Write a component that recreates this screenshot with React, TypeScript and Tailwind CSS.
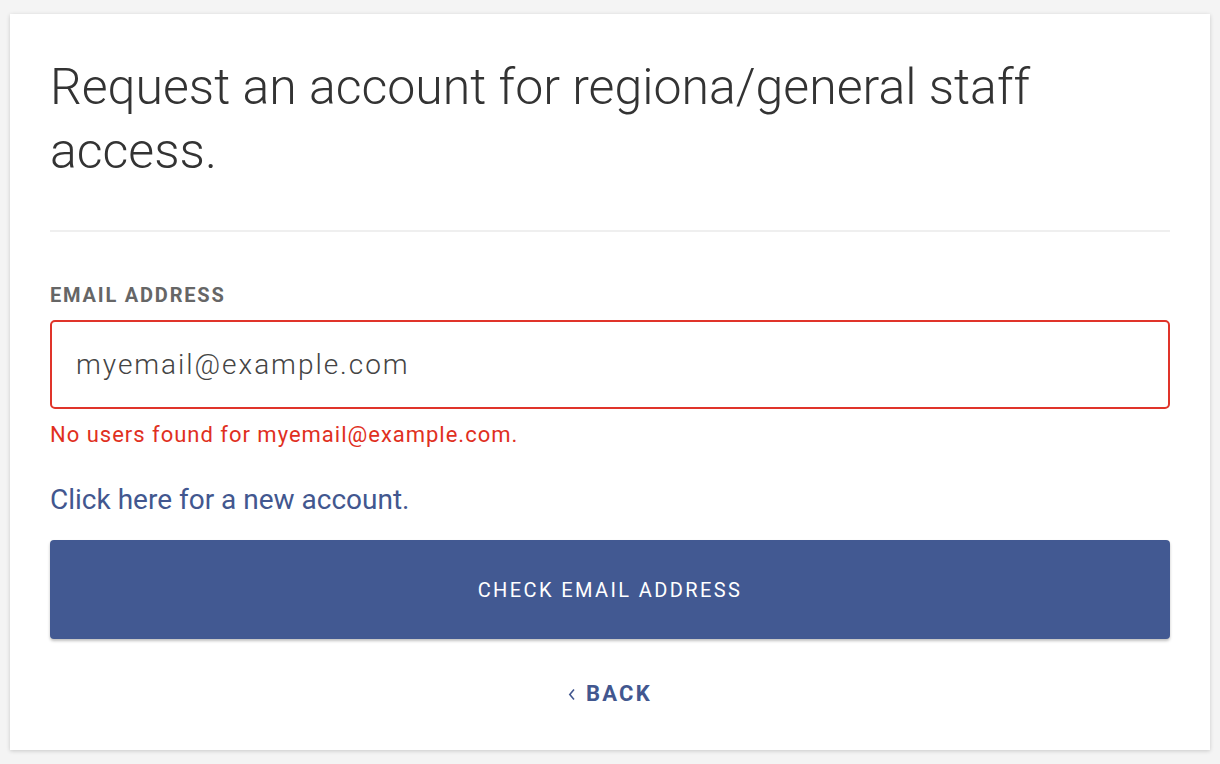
import React from 'react';

const App: React.FC = () => {
  return (
    <div className="min-h-[764px] bg-[#f4f4f4] pt-[14px] px-[10px] font-['Roboto',sans-serif]">
      <div className="bg-white shadow-[0_1px_4px_rgba(0,0,0,0.18)] px-[40px] pt-[41px] pb-[43px]">
        <h1 className="text-[50px] leading-[64px] font-light text-[#333]">
          Request an account for regiona/general staff access.
        </h1>

        <div className="mt-[47px] h-[2px] bg-[#efefef]"></div>

        <form className="mt-[51px]" onSubmit={(e) => e.preventDefault()}>
          <label className="block text-[20px] leading-[24px] font-bold tracking-[0.09em] uppercase text-[#666]">
            Email address
          </label>
          <input
            type="email"
            defaultValue="myemail@example.com"
            className="mt-[13px] block w-full h-[89px] rounded-[5px] border-2 border-[#e0342a] px-[24px] text-[28px] font-light tracking-[0.07em] text-[#444] outline-none"
          />
          <p className="mt-[13px] text-[22px] leading-[26px] tracking-[0.045em] text-[#e0301e]">
            No users found for myemail@example.com.
          </p>

          <a href="#" className="mt-[36px] block text-[28px] leading-[32px] text-[#42578f]">
            Click here for a new account.
          </a>

          <button
            type="submit"
            className="mt-[24px] flex w-full h-[99px] items-center justify-center rounded-[4px] bg-[#425992] text-white text-[20px] tracking-[0.12em] uppercase shadow-[0_2px_3px_rgba(0,0,0,0.25)]"
          >
            Check email address
          </button>

          <div className="mt-[42px] flex justify-center">
            <a href="#" className="flex items-center gap-[10px] text-[22px] leading-[26px] font-bold tracking-[0.1em] uppercase text-[#42578f]">
              <svg width="8" height="13" viewBox="0 0 8 13" fill="none" stroke="currentColor" strokeWidth="1.6">
                <path d="M6 1.5 1.8 6.5 6 11.5" />
              </svg>
              Back
            </a>
          </div>
        </form>
      </div>
    </div>
  );
};

export default App;
